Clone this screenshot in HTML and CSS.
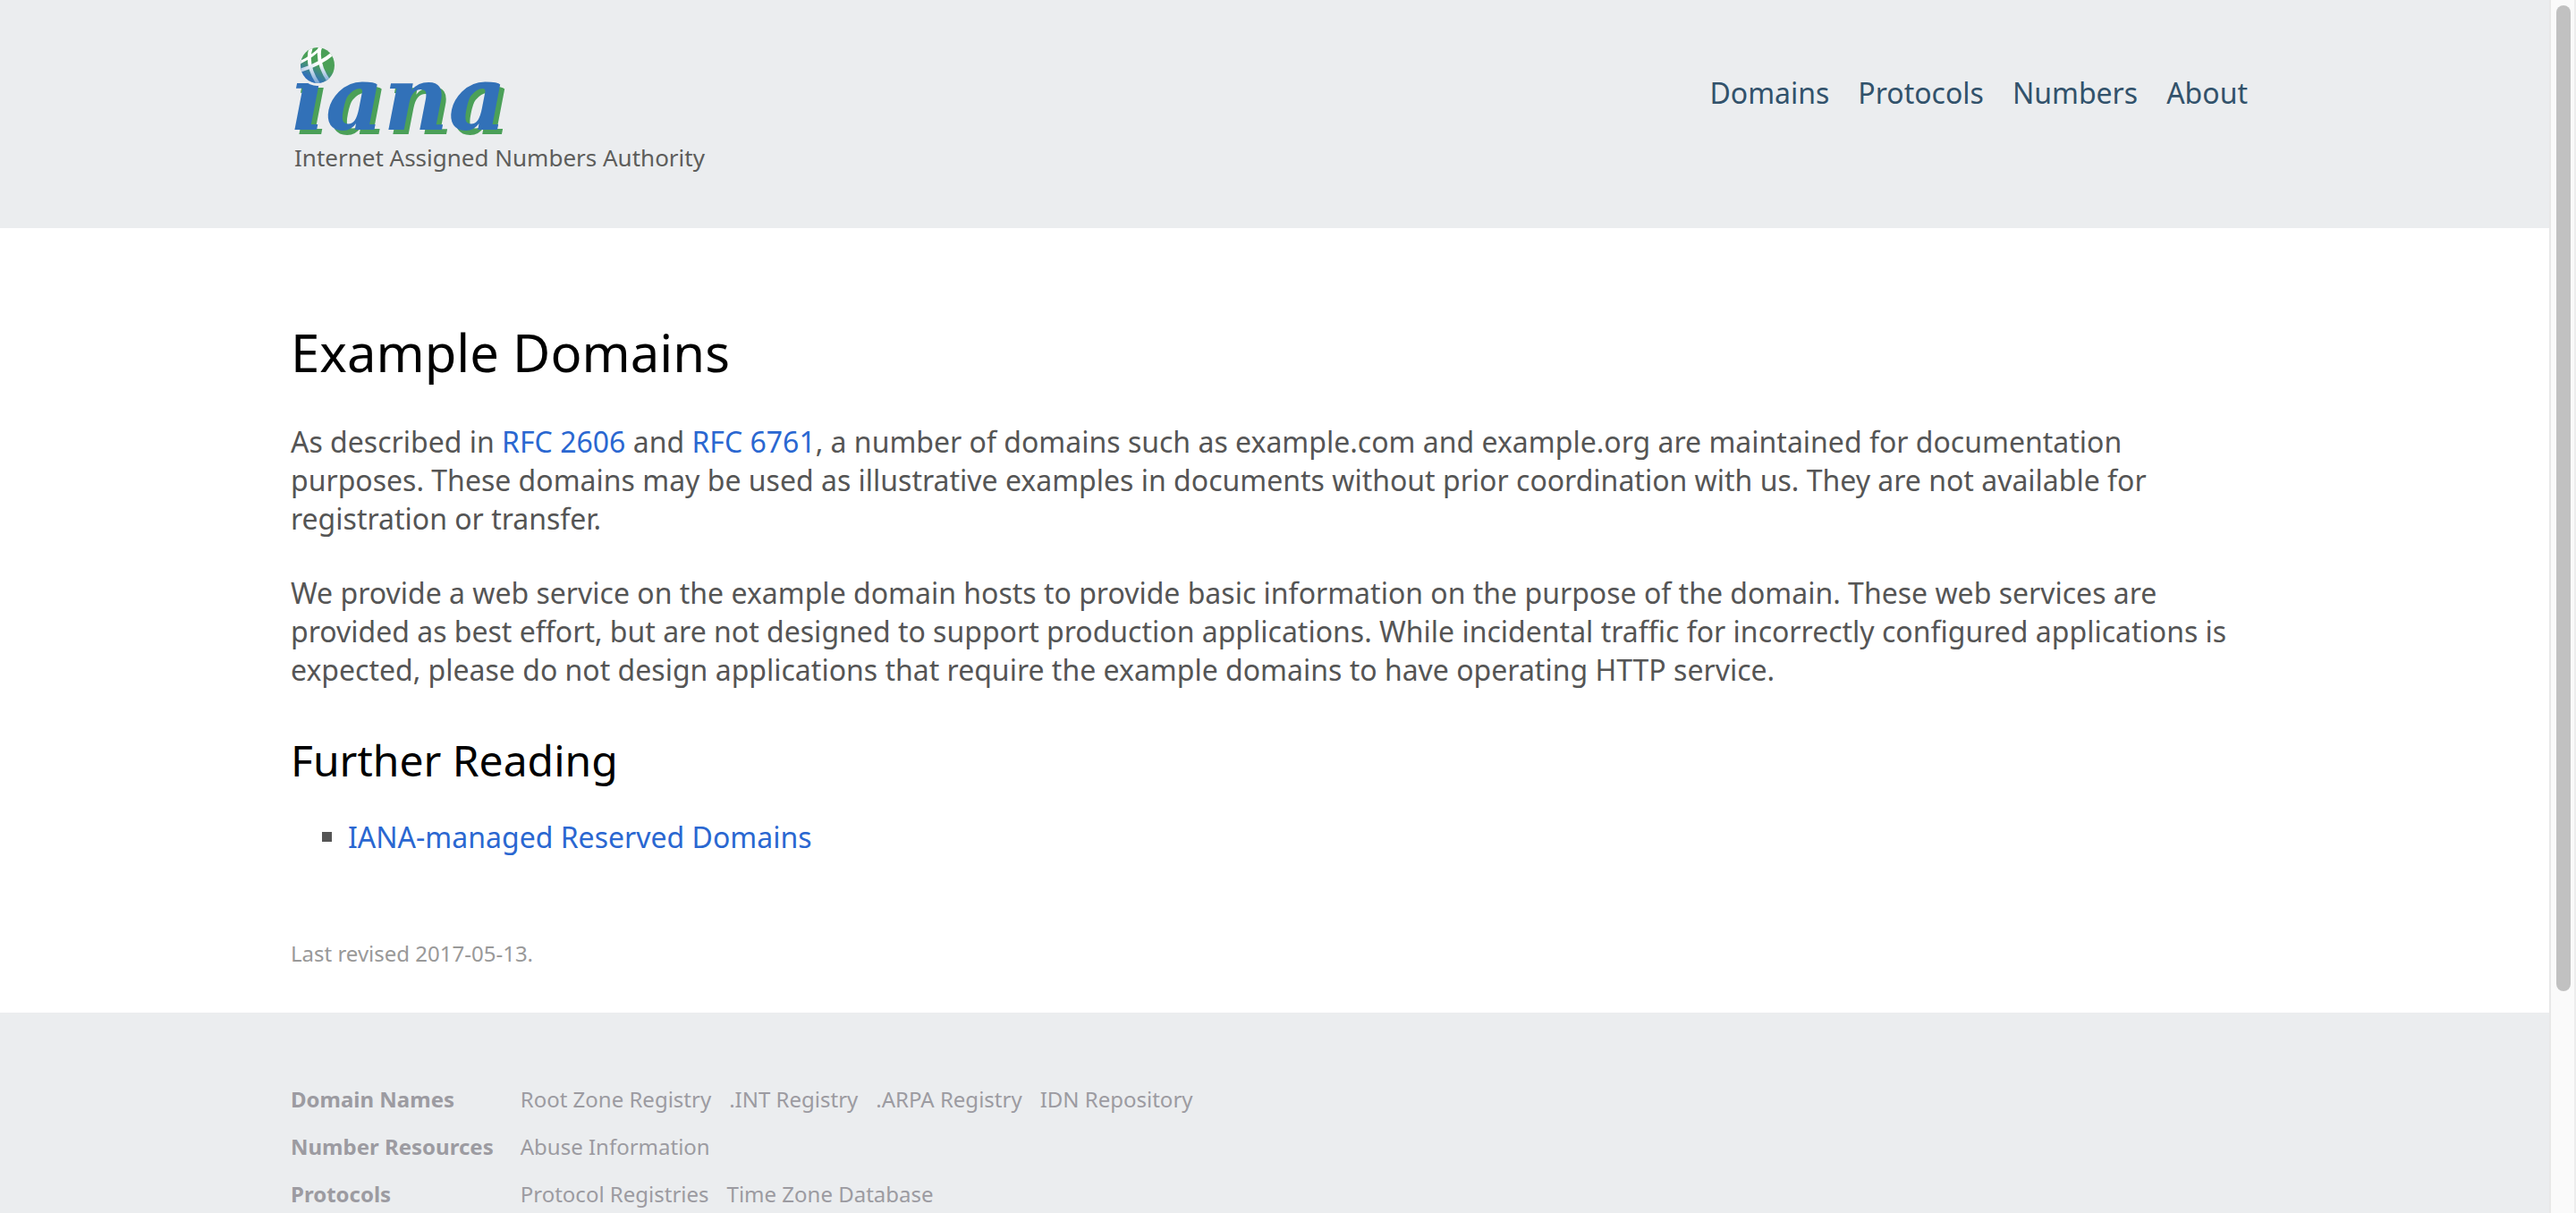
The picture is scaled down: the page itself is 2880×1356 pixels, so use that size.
FILE: index.html
```html
<!DOCTYPE html>
<html lang="en">
<head>
<meta charset="utf-8">
<title>Example Domains</title>
<link rel="stylesheet" href="styles.css">
</head>
<body>
<div class="page">
  <header class="header">
    <div class="container header-row">
      <a class="brand" href="#">
        <svg class="logo" viewBox="0 0 260 110" role="img" aria-label="iana">
          <defs>
            <linearGradient id="globe" x1="0.25" y1="1" x2="0.6" y2="0.3">
              <stop offset="0.2" stop-color="#3271b8"/>
              <stop offset="0.75" stop-color="#4ba058"/>
            </linearGradient>
            <linearGradient id="meridian" gradientUnits="userSpaceOnUse" x1="0" y1="20" x2="0" y2="46">
              <stop offset="0.1" stop-color="#fff"/>
              <stop offset="1" stop-color="#6f9fd0"/>
            </linearGradient>
            <linearGradient id="parallel" gradientUnits="userSpaceOnUse" x1="6" y1="0" x2="26" y2="0">
              <stop offset="0" stop-color="#b4cbe6"/>
              <stop offset="1" stop-color="#fff"/>
            </linearGradient>
            <clipPath id="disc"><ellipse cx="26" cy="25" rx="19" ry="20"/></clipPath>
          </defs>
          <text class="wordmark" x="-3" y="97">iana</text>
          <ellipse cx="26" cy="25" rx="22" ry="23" fill="#ebedef"/>
          <ellipse cx="26" cy="25" rx="19" ry="20" fill="url(#globe)"/>
          <g clip-path="url(#disc)" fill="none" stroke="#fff">
            <path d="M6 22Q21 15 31 4" stroke-width="3"/>
            <path d="M6 31Q29 24 44 11" stroke="url(#parallel)" stroke-width="4"/>
            <path d="M19 4Q12 24 27 46" stroke="url(#meridian)" stroke-width="4"/>
            <path d="M29 4Q24 22 40 45" stroke="url(#meridian)" stroke-width="4"/>
          </g>
        </svg>
        <span class="tagline">Internet Assigned Numbers Authority</span>
      </a>
      <nav class="nav">
        <a href="#">Domains</a>
        <a href="#">Protocols</a>
        <a href="#">Numbers</a>
        <a href="#">About</a>
      </nav>
    </div>
  </header>
  <main class="container main">
    <h1>Example Domains</h1>
    <p>As described in <a href="#">RFC 2606</a> and <a href="#">RFC 6761</a>, a number of domains such as example.com and example.org are maintained for documentation purposes. These domains may be used as illustrative examples in documents without prior coordination with us. They are not available for registration or transfer.</p>
    <p>We provide a web service on the example domain hosts to provide basic information on the purpose of the domain. These web services are provided as best effort, but are not designed to support production applications. While incidental traffic for incorrectly configured applications is expected, please do not design applications that require the example domains to have operating HTTP service.</p>
    <h2>Further Reading</h2>
    <ul class="reading">
      <li><a href="#">IANA-managed Reserved Domains</a></li>
    </ul>
    <p class="revised">Last revised 2017-05-13.</p>
  </main>
  <footer class="footer">
    <div class="container">
      <table class="links">
        <tbody>
          <tr><th scope="row">Domain Names</th><td><ul><li><a href="#">Root Zone Registry</a></li><li><a href="#">.INT Registry</a></li><li><a href="#">.ARPA Registry</a></li><li><a href="#">IDN Repository</a></li></ul></td></tr>
          <tr><th scope="row">Number Resources</th><td><ul><li><a href="#">Abuse Information</a></li></ul></td></tr>
          <tr><th scope="row">Protocols</th><td><ul><li><a href="#">Protocol Registries</a></li><li><a href="#">Time Zone Database</a></li></ul></td></tr>
        </tbody>
      </table>
    </div>
  </footer>
</div>
<div class="scrollbar"><div class="thumb"></div></div>
</body>
</html>
```
FILE: styles.css
```css
* { box-sizing: border-box; }

body {
  margin: 0;
  height: 100vh;
  display: grid;
  grid-template-columns: minmax(0, 1fr) 30px;
  overflow: hidden;
  font: 32px/43px "Noto Sans", sans-serif;
  color: #555;
  background: #fff;
}

a { color: #2a67d1; text-decoration: none; }

.page {
  display: flex;
  flex-direction: column;
  min-height: 0;
  overflow: hidden;
}

.container {
  width: 100%;
  max-width: 2200px;
  margin: 0 auto;
}

.header { flex: none; background: #ebedef; }

.header-row {
  display: flex;
  justify-content: space-between;
  align-items: flex-start;
  padding: 48px 12px 62px 4px;
}

.brand { display: flex; flex-direction: column; gap: 2px; }
.logo { display: block; width: 260px; height: 110px; overflow: visible; }

.wordmark {
  font: italic bold 100px "DejaVu Serif", serif;
  fill: #3271b8;
  filter: drop-shadow(5px 5px 0 #4ba058);
}

.tagline { color: #5d5d5b; font-size: 26px; line-height: 33px; }

.nav { display: flex; gap: 32px; padding-top: 34px; }
.nav a { color: #32526b; }

.main { flex: none; padding: 99px 0 50px; }

h1, h2 { margin: 0; font-weight: 400; color: #000; }
h1 { font-size: 58px; line-height: 80px; margin-bottom: 38px; }
h2 { font-size: 48px; line-height: 65px; margin: 47px 0 32px; }

p { margin: 0; }
p + p { margin-top: 40px; }

.reading {
  margin: 0;
  padding-left: 35px;
  list-style: none;
}
.reading li { display: flex; align-items: center; gap: 18px; }
.reading li::before { content: ""; width: 11px; height: 11px; background: #555; }

.revised { margin-top: 92px; font-size: 24px; line-height: 33px; color: #999; }

.footer {
  flex: 1 0 auto;
  padding: 70px 0;
  background: #ebedef;
  font-size: 24px;
  line-height: 33px;
  color: #9c9ba1;
}
.links { border-collapse: collapse; }
.links th { padding: 10px 30px 10px 0; text-align: left; font-weight: 700; }
.links td { padding: 10px 0; }
.links ul { display: flex; gap: 20px; margin: 0; padding: 0; list-style: none; }
.links a { color: inherit; }

.scrollbar {
  padding: 6px 4px 6px 6px;
  background: #fafafa;
  border-left: 2px solid #e8e8e8;
  border-right: 2px solid #ededed;
}
.thumb { width: 16px; height: 82%; border-radius: 8px; background: #c1c1c1; }
```
